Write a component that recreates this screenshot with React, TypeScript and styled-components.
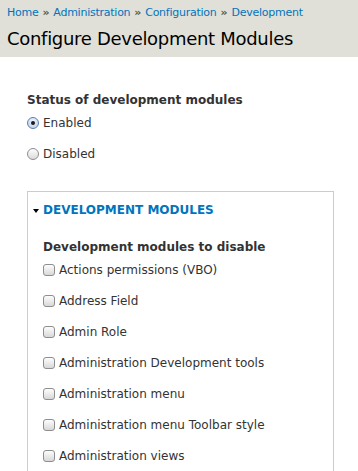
import React from 'react';
import styled, { createGlobalStyle } from 'styled-components';

const GlobalStyle = createGlobalStyle`
    html, body {
        margin: 0;
        padding: 0;
        background: #fff;
        font-family: "DejaVu Sans", "Liberation Sans", sans-serif;
        color: #333;
    }
`

const Header = styled.div`
    background: #e0e0d8;
    height: 57px;
    padding: 5px 7px 0;
    box-sizing: border-box;
`

const Breadcrumb = styled.div`
    font-size: 11px;
    line-height: 16px;
    letter-spacing: -0.25px;
    color: #555;
    white-space: nowrap;
`

const Crumb = styled.a`
    color: #0074bd;
    text-decoration: none;
`

const Sep = styled.span`
    color: #5a5a3a;
    font-weight: bold;
    margin: 0 4px;
`

const Title = styled.h1`
    margin: 5px 0 0;
    font-size: 18px;
    font-weight: normal;
    letter-spacing: -0.3px;
    line-height: 26px;
    color: #000;
    white-space: nowrap;
`

const Content = styled.div`
    padding: 35px 24px 0 27px;
`

const Label = styled.div`
    font-size: 12px;
    font-weight: bold;
    color: #333;
    line-height: 16px;
`

const OptionRow = styled.label`
    display: flex;
    align-items: center;
    gap: 4px;
    font-size: 12px;
    line-height: 16px;
    color: #333;
    height: 16px;
    margin-top: ${(props: { first?: boolean }) => (props.first ? '7px' : '15px')};
`

const Radio = styled.span`
    width: 12px;
    height: 12px;
    border-radius: 50%;
    box-sizing: border-box;
    display: flex;
    align-items: center;
    justify-content: center;
    flex-shrink: 0;
    ${(props: { checked?: boolean }) =>
        props.checked
            ? `border: 1px solid #5b7fb0;
               background: radial-gradient(circle at 50% 30%, #eef4fc 0%, #b9cde8 100%);`
            : `border: 1px solid #8e8e8e;
               background: linear-gradient(#fdfdfd, #dcdcdc);`}
`

const Dot = styled.span`
    width: 4px;
    height: 4px;
    border-radius: 50%;
    background: #1a1a1a;
`

const Box = styled.span`
    width: 12px;
    height: 12px;
    border: 1px solid #8e8e8e;
    border-radius: 3px;
    box-sizing: border-box;
    background: linear-gradient(#fdfdfd, #d8d8d8);
    flex-shrink: 0;
`

const Fieldset = styled.div`
    margin-top: 29px;
    border: 1px solid #ccc;
    border-bottom: none;
    width: 307px;
    box-sizing: border-box;
    padding: 10px 15px 0 15px;
    height: 300px;
`

const Legend = styled.div`
    display: flex;
    align-items: center;
    height: 16px;
    margin-left: -10px;
    gap: 4px;
    font-size: 12px;
    font-weight: bold;
    color: #0074bd;
    text-transform: uppercase;
`

const Arrow = styled.span`
    width: 0;
    height: 0;
    border-left: 3px solid transparent;
    border-right: 3px solid transparent;
    border-top: 4px solid #000;
    margin-top: 1px;
`

const SubLabel = styled(Label)`
    margin-top: 21px;
`

const modules = [
    'Actions permissions (VBO)',
    'Address Field',
    'Admin Role',
    'Administration Development tools',
    'Administration menu',
    'Administration menu Toolbar style',
    'Administration views',
];

const App: React.FC = () => {
    return <>
        <GlobalStyle />
        <Header>
            <Breadcrumb>
                <Crumb href="#">Home</Crumb><Sep>»</Sep>
                <Crumb href="#">Administration</Crumb><Sep>»</Sep>
                <Crumb href="#">Configuration</Crumb><Sep>»</Sep>
                <Crumb href="#">Development</Crumb>
            </Breadcrumb>
            <Title>Configure Development Modules</Title>
        </Header>
        <Content>
            <Label>Status of development modules</Label>
            <OptionRow first><Radio checked><Dot /></Radio>Enabled</OptionRow>
            <OptionRow><Radio />Disabled</OptionRow>
            <Fieldset>
                <Legend><Arrow />Development modules</Legend>
                <SubLabel>Development modules to disable</SubLabel>
                {modules.map((m, i) => <OptionRow key={i} first={i === 0}><Box />{m}</OptionRow>)}
            </Fieldset>
        </Content>
    </>
}

export default App;
